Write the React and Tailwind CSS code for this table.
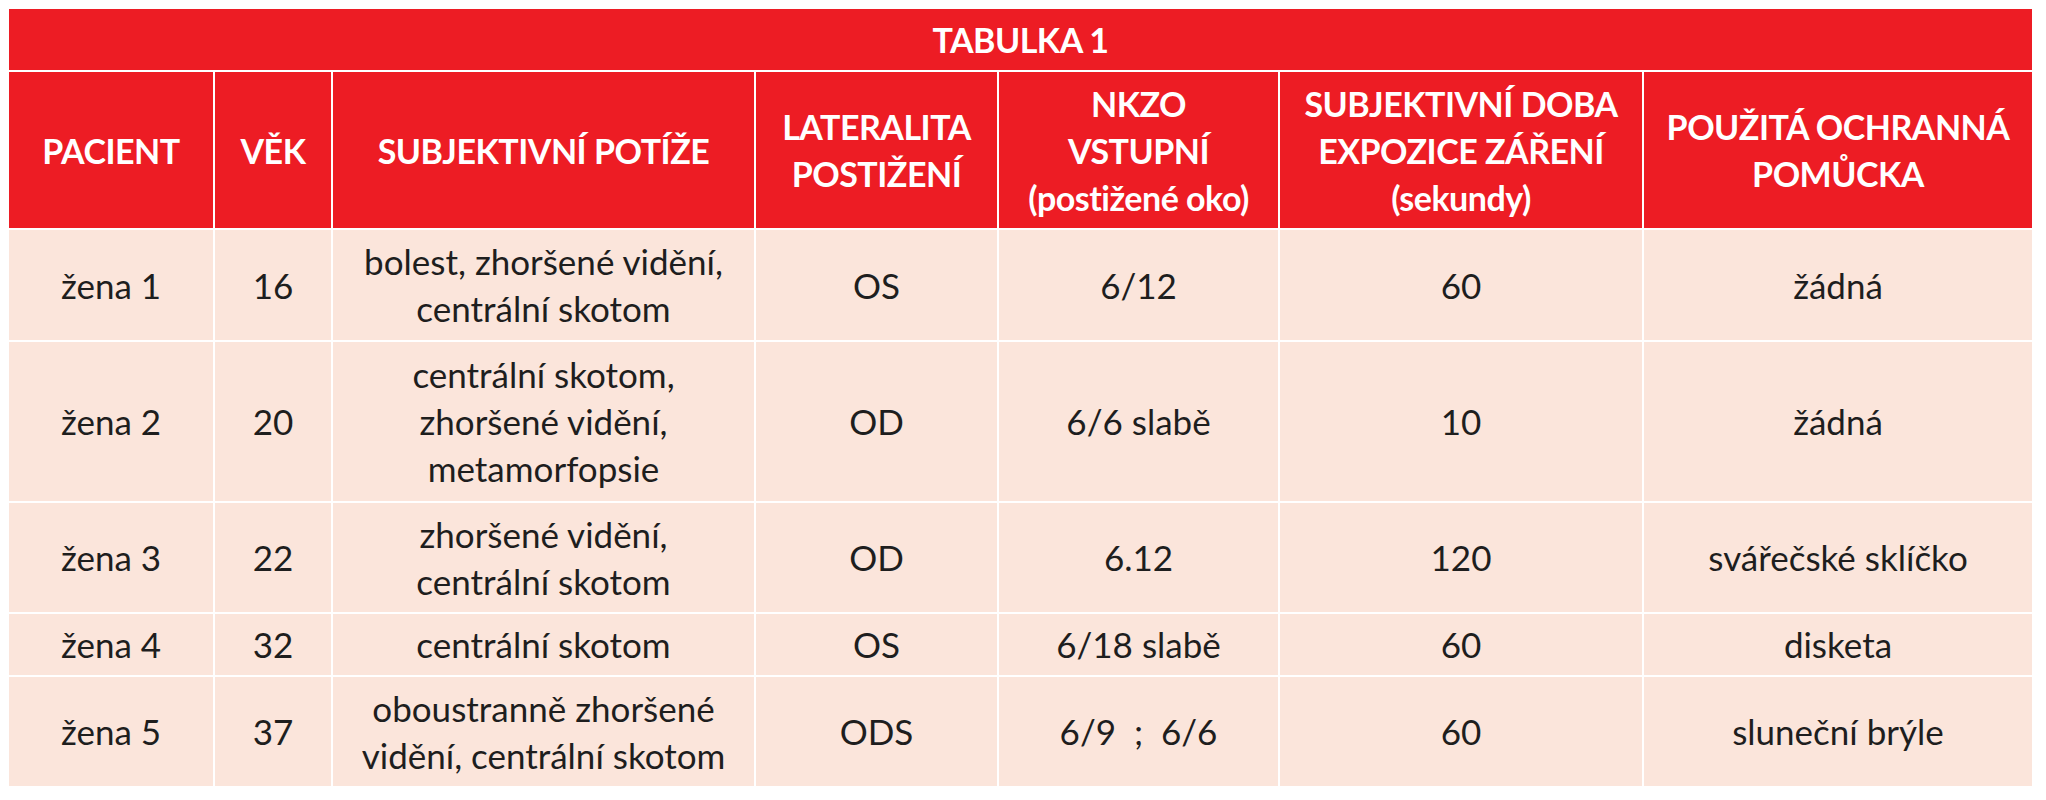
import React from "react";

const headers = [
  ["PACIENT"],
  ["VĚK"],
  ["SUBJEKTIVNÍ POTÍŽE"],
  ["LATERALITA", "POSTIŽENÍ"],
  ["NKZO", "VSTUPNÍ", "(postižené oko)"],
  ["SUBJEKTIVNÍ DOBA", "EXPOZICE ZÁŘENÍ", "(sekundy)"],
  ["POUŽITÁ OCHRANNÁ", "POMŮCKA"],
];

const rows = [
  ["žena 1", "16", ["bolest, zhoršené vidění,", "centrální skotom"], "OS", "6/12", "60", "žádná"],
  ["žena 2", "20", ["centrální skotom,", "zhoršené vidění,", "metamorfopsie"], "OD", "6/6 slabě", "10", "žádná"],
  ["žena 3", "22", ["zhoršené vidění,", "centrální skotom"], "OD", "6.12", "120", "svářečské sklíčko"],
  ["žena 4", "32", ["centrální skotom"], "OS", "6/18 slabě", "60", "disketa"],
  ["žena 5", "37", ["oboustranně zhoršené", "vidění, centrální skotom"], "ODS", "6/9  ;  6/6", "60", "sluneční brýle"],
];

function Lines({ value }) {
  const lines = Array.isArray(value) ? value : [value];
  return lines.map((line, i) => (
    <span key={i} className="block whitespace-pre">
      {line}
    </span>
  ));
}

export default function App() {
  return (
    <div className="w-[2046px] h-[800px] bg-white pt-[9px] pl-[9px] font-['Lato','Liberation_Sans',sans-serif]">
      <div className="grid w-[2023px] gap-[2px] grid-cols-[204px_116px_421px_241px_279px_362px_388px] grid-rows-[61px_156px_110px_159px_109px_61px_109px] leading-[47px]">
        <div className="col-span-7 bg-[#ed1c24] flex items-center justify-center text-[34px] text-white font-bold tracking-[-0.5px]">
          TABULKA 1
        </div>

        {headers.map((h, i) => (
          <div
            key={i}
            className="bg-[#ed1c24] flex flex-col items-center justify-center text-center text-[34px] text-white font-bold tracking-[-0.5px]"
          >
            <Lines value={h} />
          </div>
        ))}

        {rows.map((row, r) =>
          row.map((cell, c) => (
            <div
              key={`${r}-${c}`}
              className="bg-[#fbe5db] flex flex-col items-center justify-center text-center text-[35px] text-[#1e1e1e]"
            >
              <Lines value={cell} />
            </div>
          ))
        )}
      </div>
    </div>
  );
}
